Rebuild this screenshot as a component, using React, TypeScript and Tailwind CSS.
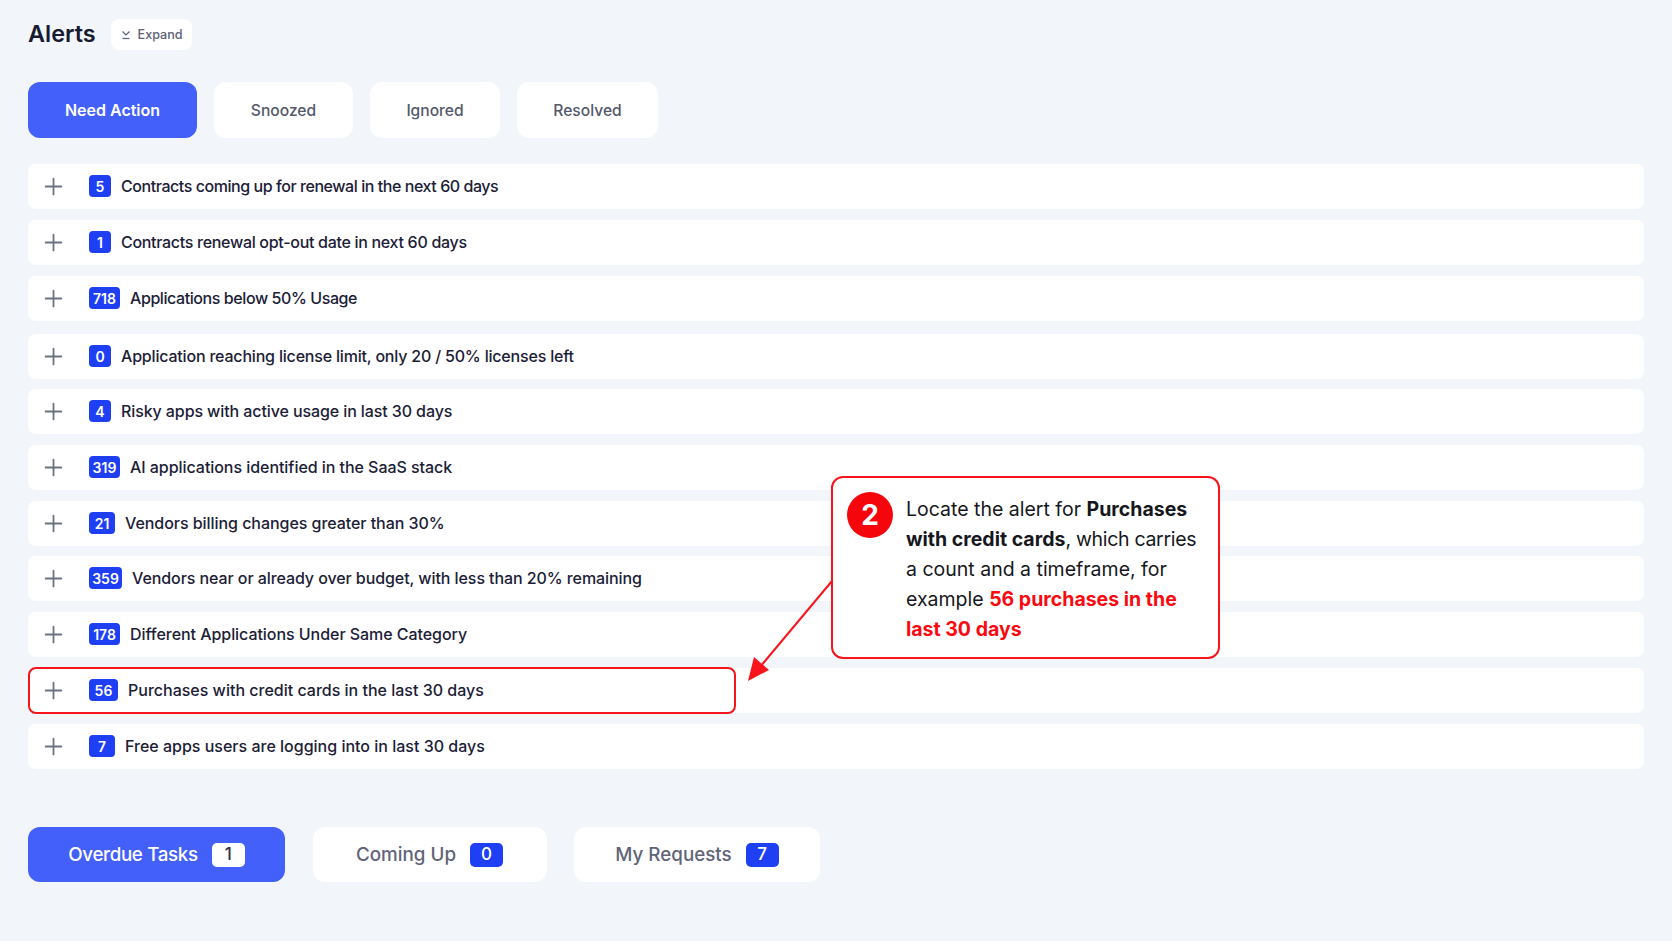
import { Plus } from "lucide-react";

type Alert = {
  count: number;
  text: string;
  highlight?: boolean;
  extra?: string;
  tracking?: string;
  badge?: string;
};

const alerts: Alert[] = [
  { count: 5, text: "Contracts coming up for renewal in the next 60 days", tracking: "tracking-[-0.44px]" },
  { count: 1, text: "Contracts renewal opt-out date in next 60 days", tracking: "tracking-[-0.3px]" },
  { count: 718, text: "Applications below 50% Usage", tracking: "tracking-[-0.42px]", badge: "w-[31px]" },
  { count: 0, text: "Application reaching license limit, only 20 / 50% licenses left", extra: "mt-[2px]", tracking: "tracking-[-0.19px]" },
  { count: 4, text: "Risky apps with active usage in last 30 days", extra: "-mt-[1px]", tracking: "tracking-[-0.1px]" },
  { count: 319, text: "AI applications identified in the SaaS stack", tracking: "tracking-[-0.05px]", badge: "w-[31px]" },
  { count: 21, text: "Vendors billing changes greater than 30%", tracking: "tracking-[-0.05px]", badge: "w-[26px]" },
  { count: 359, text: "Vendors near or already over budget, with less than 20% remaining", extra: "-mt-[1px]", tracking: "tracking-[-0.08px]", badge: "w-[33px]" },
  { count: 178, text: "Different Applications Under Same Category", tracking: "tracking-[-0.05px]", badge: "w-[31px]" },
  { count: 56, text: "Purchases with credit cards in the last 30 days", highlight: true, badge: "w-[29px]" },
  { count: 7, text: "Free apps users are logging into in last 30 days", badge: "w-[26px]" },
];

const tabs = [
  { label: "Need Action", width: "w-[169px]", active: true },
  { label: "Snoozed", width: "w-[139px]" },
  { label: "Ignored", width: "w-[130px]" },
  { label: "Resolved", width: "w-[141px]" },
];

const tasks = [
  { label: "Overdue Tasks", count: 1, width: "w-[257px]", active: true },
  { label: "Coming Up", count: 0, width: "w-[234px]" },
  { label: "My Requests", count: 7, width: "w-[246px]" },
];

const AlertRow = ({ alert }: { alert: Alert }) => (
  <div className={`relative flex h-[45px] items-center rounded-lg bg-white pb-[1px] pl-[12px] ${alert.extra ?? ""}`}>
    <Plus className="h-[27px] w-[27px] text-[#6b7280]" strokeWidth={1.6} />
    <span
      className={`ml-[22px] flex h-[22px] min-w-[22px] items-center justify-center rounded-[4px] bg-[#1f3ff5] px-[4px] text-[14px] font-semibold text-white ${alert.badge ?? ""}`}
    >
      {alert.count}
    </span>
    <span className={`ml-[10px] text-[16px] font-medium text-[#1b2036] ${alert.tracking ?? ""}`}>{alert.text}</span>
    {alert.highlight && (
      <div className="absolute -top-[1px] left-0 h-[47px] w-[708px] rounded-lg border-2 border-[#f7141b]" />
    )}
  </div>
);

export default function App() {
  return (
    <div className="relative h-[941px] w-[1672px] overflow-hidden bg-[#f2f5fa] px-[28px] pt-[19px] font-['Inter',sans-serif]">
      <div className="flex items-start gap-[15px]">
        <h1 className="text-[23.4px] leading-[29px] font-semibold text-[#171b31]">Alerts</h1>
        <button className="flex h-[31px] w-[81px] items-center justify-center gap-[6px] rounded-lg bg-white pt-[1px] text-[12.6px] font-medium text-[#5b6178]">
          <svg viewBox="0 0 12 12" className="h-[12px] w-[12px]" fill="none" stroke="#5b6178" strokeWidth="1.2">
            <path d="M2.5 2.5 6 6l3.5-3.5" />
            <path d="M2.5 9.5h7" />
          </svg>
          Expand
        </button>
      </div>

      <div className="mt-[32px] flex gap-[17px]">
        {tabs.map((tab) => (
          <button
            key={tab.label}
            className={`h-[56px] rounded-xl font-medium ${tab.width} ${
              tab.active ? "bg-[#4360fb] text-[16px] font-semibold text-white" : "bg-white pt-[1px] text-[15.6px] text-[#53586b]"
            }`}
          >
            {tab.label}
          </button>
        ))}
      </div>

      <div className="mt-[26px] flex flex-col gap-[11px]">
        {alerts.map((alert) => (
          <AlertRow key={alert.text} alert={alert} />
        ))}
      </div>

      <div className="mt-[58px] flex gap-[27.5px]">
        {tasks.map((task) => (
          <button
            key={task.label}
            className={`flex h-[55px] items-center justify-center gap-[14px] rounded-xl pt-[1px] text-[18.8px] font-medium ${task.width} ${
              task.active ? "bg-[#4360fb] tracking-[-0.35px] text-white" : "bg-white text-[#5f6478]"
            }`}
          >
            {task.label}
            <span
              className={`flex h-[24px] w-[33px] items-center justify-center rounded-[5px] text-[17px] font-medium ${
                task.active ? "bg-white text-[#2b3045]" : "bg-[#1f3ff5] text-white"
              }`}
            >
              {task.count}
            </span>
          </button>
        ))}
      </div>

      <svg className="absolute left-[740px] top-[570px] h-[120px] w-[100px]" viewBox="0 0 100 120" fill="none">
        <path d="M92 11 20 97" stroke="#f7141b" strokeWidth="2" />
        <path d="M8 111 14 87 29 100Z" fill="#f7141b" />
      </svg>

      <div className="absolute left-[831px] top-[476px] flex h-[183px] w-[389px] gap-[13px] rounded-xl border-2 border-[#f7141b] bg-white pl-[14px] pt-[14px]">
        <span className="flex h-[46px] w-[46px] shrink-0 items-center justify-center rounded-full bg-[#f4060c] text-[28px] font-bold text-white">
          2
        </span>
        <p className="mt-[2px] w-[305px] text-[19.5px] leading-[30px] text-[#16171c]">
          Locate the alert for <b className="font-bold">Purchases with credit cards</b>
          <span className="tracking-[-0.3px]">, which carries</span> a count and a timeframe, for example{" "}
          <b className="font-bold text-[#fa0a10]">56 purchases in the last 30 days</b>
        </p>
      </div>
    </div>
  );
}
